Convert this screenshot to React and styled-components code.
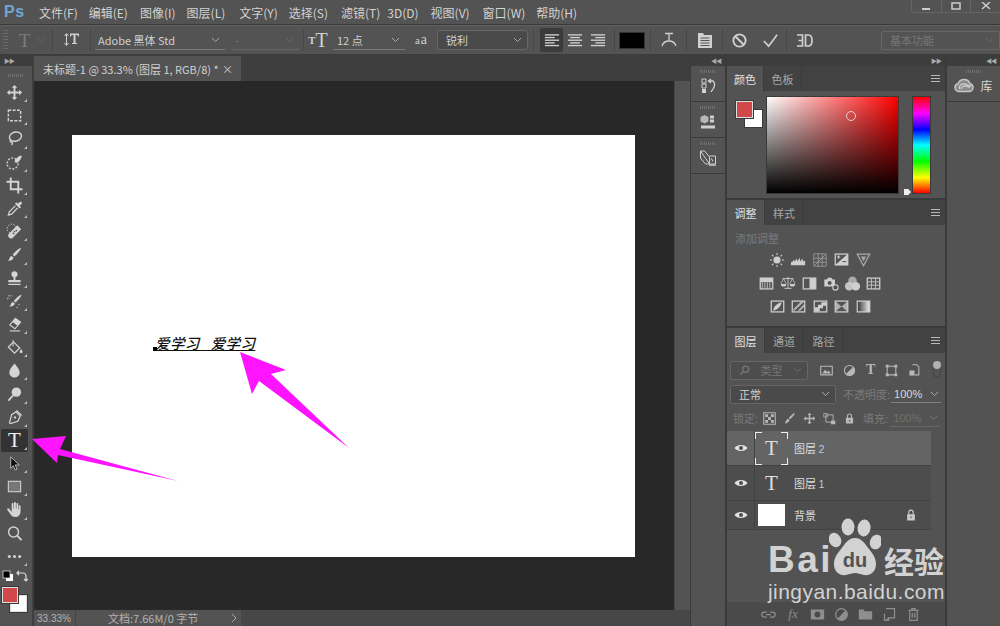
import React from "react";
import styled, { createGlobalStyle } from "styled-components";

const GlobalStyle = createGlobalStyle`
  html, body { margin: 0; padding: 0; background: #535353; }
  * { box-sizing: border-box; }
`;

const CJK = `"Noto Sans CJK SC", "Liberation Sans", sans-serif`;

const Page = styled.div`
  position: relative;
  width: 1000px;
  height: 626px;
  overflow: hidden;
  display: flex;
  flex-direction: column;
  background: #535353;
  color: #cfcfcf;
  font-family: ${CJK};
  font-size: 12px;
`;

/* menu */
const MenuBar = styled.div`
  position: relative;
  height: 25px;
  flex: none;
  display: flex;
  align-items: center;
  padding-left: 4px;
  background: #535353;
  border-bottom: 1px solid #3a3a3a;
`;

const Logo = styled.div`
  width: 35px;
  font: bold 16px "Liberation Sans", sans-serif;
  letter-spacing: 0.5px;
  color: #6ea6d6;
`;

const MenuItem = styled.div`
  margin-right: ${p => p.$gap}px;
  white-space: nowrap;
  color: #d2d2d2;
  font-size: 12px;
`;

const WindowControls = styled.div`
  position: absolute;
  top: 0;
  right: 0;
  width: 89px;
  height: 13px;
  display: flex;
  border: 1px solid #656565;
  border-top: 0;
  border-right: 0;
  border-radius: 0 0 0 3px;
`;

const WindowButton = styled.div`
  flex: 1;
  display: flex;
  align-items: center;
  justify-content: center;
  border-right: 1px solid #656565;
  &:last-child { border-right: 0; }
`;

/* options */
const OptionsBar = styled.div`
  height: 30px;
  flex: none;
  display: flex;
  align-items: center;
  padding-left: 3px;
  background: #535353;
  border-top: 1px solid #606060;
  border-bottom: 1px solid #3c3c3c;
`;

const Grip = styled.div`
  width: 6px;
  height: 20px;
  background: repeating-linear-gradient(to bottom, #6a6a6a 0 1px, transparent 1px 3px);
`;

const Sep = styled.div`
  width: 1px;
  height: 22px;
  flex: none;
  margin-left: ${p => p.$ml || 0}px;
  background: #474747;
`;

const Slot = styled.div`
  width: ${p => p.$w}px;
  height: 24px;
  flex: none;
  display: flex;
  align-items: ${p => p.$align || "center"};
  justify-content: center;
  gap: ${p => p.$gap || 0}px;
  padding-left: ${p => p.$pl || 0}px;
  color: ${p => p.$dim ? "#7c7c7c" : "#d0d0d0"};
  background: ${p => p.$active ? "#3b3b3b" : "transparent"};
  border-radius: 2px;
  margin-left: ${p => p.$ml || 0}px;
`;

const SerifT = styled.span`
  font: ${p => p.$bold ? "bold" : "normal"} ${p => p.$size}px "Liberation Serif", serif;
  line-height: 1;
  color: ${p => p.$color || "inherit"};
`;

const UnderSelect = styled.div`
  width: ${p => p.$w}px;
  height: 20px;
  flex: none;
  margin-left: ${p => p.$ml || 0}px;
  display: flex;
  align-items: center;
  justify-content: space-between;
  padding: 0 5px 0 3px;
  border-bottom: 1px solid ${p => p.$dim ? "#656565" : "#7a7a7a"};
  color: ${p => p.$dim ? "#777" : "#cfcfcf"};
  font-size: 11px;
  white-space: nowrap;
`;

const BoxSelect = styled.div`
  width: ${p => p.$w}px;
  height: ${p => p.$h || 19}px;
  flex: none;
  margin-left: ${p => p.$ml || 0}px;
  display: flex;
  align-items: center;
  justify-content: space-between;
  padding: 0 5px 0 8px;
  border: 1px solid #666;
  border-radius: 2px;
  background: ${p => p.$bg || "#4a4a4a"};
  color: ${p => p.$dim ? "#777" : "#d0d0d0"};
  font-size: 11px;
  white-space: nowrap;
`;

const ColorBox = styled.div`
  width: 26px;
  height: 17px;
  flex: none;
  margin-left: 4px;
  background: #000;
  border: 1px solid #333;
`;

/* workspace */
const Workspace = styled.div`
  flex: 1;
  min-height: 0;
  display: flex;
`;

const ToolColumn = styled.div`
  width: 34px;
  flex: none;
  display: flex;
  flex-direction: column;
  align-items: stretch;
  border-right: 2px solid #3e3e3e;
`;

const CollapseStrip = styled.div`
  height: 11px;
  flex: none;
  display: flex;
  align-items: center;
  justify-content: ${p => p.$align || "flex-end"};
  padding: 0 4px;
  background: #3d3d3d;
  color: #aaa;
  font-size: 6px;
  letter-spacing: -1px;
  line-height: 1;
`;

const SmallGrip = styled.div`
  width: 16px;
  height: 3px;
  margin: ${p => p.$top || 4}px auto 4px;
  flex: none;
  background: repeating-linear-gradient(to right, #707070 0 1px, transparent 1px 2px);
`;

const ToolButton = styled.div`
  position: relative;
  height: 23.2px;
  margin: 0 4px 0 1px;
  flex: none;
  display: flex;
  align-items: center;
  justify-content: center;
  border-radius: 2px;
  background: ${p => p.$active ? "#333" : "transparent"};
  color: #d4d4d4;
  &::after {
    content: "";
    display: ${p => p.$flyout ? "block" : "none"};
    position: absolute;
    right: 1px;
    bottom: 2px;
    border-left: 3px solid transparent;
    border-bottom: 3px solid #bbb;
  }
`;

const ColorTools = styled.div`
  display: flex;
  flex-direction: column;
  padding: 1px 0 0 2px;
`;

const MiniColorRow = styled.div`
  display: flex;
  justify-content: space-between;
  width: 26px;
  height: 15px;
  align-items: center;
`;

const SwatchStack = styled.div`
  position: relative;
  width: 26px;
  height: 26px;
  margin-top: 3px;
`;

const FrontSwatch = styled.div`
  position: absolute;
  left: ${p => p.$x}px;
  top: ${p => p.$y}px;
  width: ${p => p.$s}px;
  height: ${p => p.$s}px;
  background: ${p => p.$color};
  border: 1px solid ${p => p.$edge || "#ddd"};
  box-shadow: 0 0 0 1px #3a3a3a;
`;

const DocColumn = styled.div`
  width: 656px;
  flex: none;
  display: flex;
  flex-direction: column;
`;

const TabStrip = styled.div`
  height: 26px;
  flex: none;
  display: flex;
  align-items: flex-end;
  background: #3e3e3e;
`;

const DocTab = styled.div`
  width: 207px;
  height: 25px;
  display: flex;
  align-items: center;
  justify-content: space-between;
  padding: 0 8px 0 9px;
  background: #535353;
  color: #d0d0d0;
  font-size: 11px;
  white-space: nowrap;
`;

const DocBody = styled.div`
  flex: 1;
  min-height: 0;
  display: flex;
`;

const Viewport = styled.div`
  flex: 1;
  min-width: 0;
  background: #282828;
  padding: 54px 0 0 38px;
`;

const Artboard = styled.div`
  position: relative;
  width: 563px;
  height: 422px;
  background: #fff;
`;

const CanvasText = styled.div`
  position: absolute;
  left: 83px;
  top: 198px;
  font: italic 500 14.5px ${CJK};
  line-height: 19px;
  letter-spacing: 0.4px;
  color: #111;
  white-space: pre;
  text-decoration: underline;
  text-underline-offset: 1px;
`;

const TextCursor = styled.div`
  position: absolute;
  left: 81px;
  top: 212px;
  width: 4px;
  height: 4px;
  background: #000;
`;

const ScrollTrack = styled.div`
  width: 16px;
  flex: none;
  background: #535353;
  border-left: 1px solid #444;
`;

const StatusBar = styled.div`
  height: 16px;
  flex: none;
  display: flex;
  align-items: center;
  background: #474747;
  font-size: 11px;
  color: #b4b4b4;
`;

const ZoomBox = styled.div`
  width: 42px;
  height: 100%;
  padding-left: 3px;
  display: flex;
  align-items: center;
  background: #535353;
  border-right: 1px solid #444;
  font-family: "Liberation Sans", sans-serif;
  font-size: 10px;
`;

const DocInfo = styled.div`
  width: 165px;
  height: 100%;
  display: flex;
  align-items: center;
  justify-content: space-between;
  padding: 0 4px 0 32px;
  background: #535353;
  white-space: nowrap;
`;

/* right side */
const IconDock = styled.div`
  width: 37px;
  flex: none;
  display: flex;
  flex-direction: column;
  border-left: 1px solid #3a3a3a;
  border-right: 2px solid #3a3a3a;
`;

const DockButton = styled.div`
  height: 36px;
  flex: none;
  display: flex;
  flex-direction: column;
  align-items: center;
  justify-content: flex-start;
  border-bottom: 1px solid #3a3a3a;
  color: #d0d0d0;
`;

const PanelDock = styled.div`
  width: 220px;
  flex: none;
  display: flex;
  flex-direction: column;
  border-right: 2px solid #3a3a3a;
`;

const Panel = styled.div`
  height: ${p => p.$h}px;
  flex: ${p => p.$grow ? 1 : "none"};
  min-height: 0;
  display: flex;
  flex-direction: column;
  border-bottom: ${p => p.$grow ? 0 : "2px solid #3a3a3a"};
`;

const TabRow = styled.div`
  height: 25px;
  flex: none;
  display: flex;
  align-items: stretch;
  background: #424242;
  padding-right: 5px;
`;

const PanelTab = styled.div`
  width: ${p => p.$w}px;
  display: flex;
  align-items: center;
  justify-content: center;
  font-size: 11px;
  color: ${p => p.$active ? "#e0e0e0" : "#a8a8a8"};
  background: ${p => p.$active ? "#535353" : "transparent"};
  border-right: 1px solid #3a3a3a;
`;

const PanelMenu = styled.div`
  width: 9px;
  height: 7px;
  margin: auto 0 auto auto;
  background: repeating-linear-gradient(to bottom, #b8b8b8 0 1px, transparent 1px 3px);
`;

const ColorBody = styled.div`
  flex: 1;
  display: flex;
  padding: 6px 0 0 9px;
`;

const ColorChips = styled.div`
  position: relative;
  width: 31px;
  height: 30px;
  margin-top: 4px;
`;

const Gradient = styled.div`
  position: relative;
  width: 131px;
  height: 96px;
  background: linear-gradient(to top, #000, transparent), linear-gradient(to right, #fff, #f00);
  outline: 1px solid #3a3a3a;
`;

const Picker = styled.div`
  position: absolute;
  left: 79px;
  top: 14px;
  width: 10px;
  height: 10px;
  border-radius: 50%;
  border: 1px solid #e8d0d0;
`;

const HueBar = styled.div`
  position: relative;
  width: 17px;
  height: 96px;
  margin-left: 15px;
  outline: 1px solid #3a3a3a;
  background: linear-gradient(to bottom, #f00, #f0f 17%, #00f 34%, #0ff 50%, #0f0 67%, #ff0 84%, #f00);
`;

const HueMarker = styled.div`
  position: absolute;
  left: -9px;
  bottom: -2px;
  width: 7px;
  height: 6px;
  background: #eee;
  clip-path: polygon(0 0, 60% 0, 100% 50%, 60% 100%, 0 100%);
`;

const AdjustBody = styled.div`
  flex: 1;
  padding: 5px 0 0 8px;
`;

const MutedLabel = styled.div`
  color: ${p => p.$color || "#7a7a7a"};
  font-size: 11px;
  white-space: nowrap;
  margin-left: ${p => p.$ml || 0}px;
`;

const AdjustRows = styled.div`
  margin: 2px 0 0 20px;
  width: 130px;
`;

const AdjustRow = styled.div`
  height: 23.5px;
  display: flex;
  align-items: center;
  justify-content: center;
`;

const AdjustCell = styled.div`
  width: 21.5px;
  display: flex;
  justify-content: center;
`;

const LayerControls = styled.div`
  height: ${p => p.$h}px;
  flex: none;
  display: flex;
  align-items: center;
  padding: ${p => p.$pt || 0}px 3px 0;
`;

const IconGroup = styled.div`
  display: flex;
  align-items: center;
  margin-left: ${p => p.$ml || 0}px;
  gap: ${p => p.$gap || 0}px;
  color: #b8b8b8;
`;

const FilterToggle = styled.div`
  position: relative;
  width: 8px;
  height: 16px;
  margin-left: 12px;
  border: 1px solid #444;
  border-radius: 4px;
  &::before {
    content: "";
    position: absolute;
    left: -1px;
    top: -2px;
    width: 8px;
    height: 8px;
    border-radius: 50%;
    background: #b0b0b0;
  }
`;

const OpacitySelect = styled.div`
  width: 50px;
  height: 18px;
  margin-left: ${p => p.$ml || 1}px;
  display: flex;
  align-items: center;
  justify-content: space-between;
  padding-right: 2px;
  border-bottom: 1px solid ${p => p.$dim ? "#666" : "#808080"};
  color: ${p => p.$dim ? "#707070" : "#d8d8d8"};
  font: 11px "Liberation Sans", sans-serif;
  padding-left: 3px;
`;

const LayerList = styled.div`
  width: 204px;
  flex: none;
`;

const LayerRow = styled.div`
  height: ${p => p.$h}px;
  display: flex;
  align-items: center;
  background: ${p => p.$selected ? "#646464" : "#4d4d4d"};
  border-bottom: 1px solid #424242;
`;

const EyeCell = styled.div`
  width: 28px;
  height: 100%;
  flex: none;
  display: flex;
  align-items: center;
  justify-content: center;
  border-right: 1px solid #424242;
`;

const LayerThumb = styled.div`
  width: ${p => p.$w || 33}px;
  height: ${p => p.$h}px;
  flex: none;
  margin-left: ${p => p.$ml}px;
  display: flex;
  align-items: center;
  justify-content: center;
  background: ${p => p.$white ? "#fff" : "transparent"};
  color: #ddd;
`;

const SelectedThumb = styled(LayerThumb)`
  position: relative;
  border: 0;
  background:
    linear-gradient(#eee, #eee) 0 0 / 7px 1px no-repeat,
    linear-gradient(#eee, #eee) 0 0 / 1px 7px no-repeat,
    linear-gradient(#eee, #eee) 100% 0 / 7px 1px no-repeat,
    linear-gradient(#eee, #eee) 100% 0 / 1px 7px no-repeat,
    linear-gradient(#eee, #eee) 0 100% / 7px 1px no-repeat,
    linear-gradient(#eee, #eee) 0 100% / 1px 7px no-repeat,
    linear-gradient(#eee, #eee) 100% 100% / 7px 1px no-repeat,
    linear-gradient(#eee, #eee) 100% 100% / 1px 7px no-repeat;
`;

const LayerName = styled.div`
  margin-left: ${p => p.$ml}px;
  color: #dcdcdc;
  font-size: 11px;
  white-space: nowrap;
  span { color: #a9c9e8; font-family: "Liberation Sans", sans-serif; font-size: 11px; }
`;

const LockMark = styled.div`
  margin-left: auto;
  margin-right: 13px;
  display: flex;
  color: #c8c8c8;
`;

const LayerSpacer = styled.div`
  flex: 1;
`;

const LayerFooter = styled.div`
  height: 24px;
  flex: none;
  display: flex;
  align-items: center;
  padding-left: 34px;
  gap: 9px;
  background: #4a4a4a;
  color: #8e8e8e;
`;

const FooterFx = styled.span`
  width: 16px;
  text-align: center;
  font: italic 13px "Liberation Serif", serif;
  color: #8e8e8e;
`;

const LibDock = styled.div`
  flex: 1;
  min-width: 0;
  display: flex;
  flex-direction: column;
`;

const LibButton = styled.div`
  height: 36px;
  flex: none;
  display: flex;
  flex-direction: column;
  align-items: center;
  border-bottom: 1px solid #3a3a3a;
`;

const LibInner = styled.div`
  display: flex;
  align-items: center;
  gap: 6px;
  font-size: 12px;
  color: #d8d8d8;
`;

/* overlays */
const ArrowLayer = styled.svg`
  position: absolute;
  left: 0;
  top: 0;
  pointer-events: none;
`;

const Watermark = styled.div`
  position: absolute;
  left: 768px;
  top: 518px;
  width: 200px;
  color: #d2d2d2;
  pointer-events: none;
`;

const BaiduRow = styled.div`
  display: flex;
  align-items: flex-end;
  height: 60px;
`;

const BaiWord = styled.span`
  font: bold 37px/36px "Liberation Sans", sans-serif;
  letter-spacing: 2.5px;
`;

const PawSpot = styled.div`
  width: 52px;
  height: 60px;
  flex: none;
  margin-left: -4px;
`;

const JingYan = styled.span`
  font: bold 30px/36px ${CJK};
  margin-left: 3px;
  white-space: nowrap;
`;

const Domain = styled.div`
  font: 21px/24px "Liberation Sans", "Open Sans", sans-serif;
  letter-spacing: 0.45px;
  margin-top: 2px;
  white-space: nowrap;
`;

const Svg = ({ size = 18, children, ...rest }) => (
  <svg width={size} height={size} viewBox="0 0 18 18" fill="currentColor" stroke="none" {...rest}>{children}</svg>
);

const Chevron = ({ color = "#aaa" }) => (
  <svg width="9" height="6" viewBox="0 0 9 6" fill="none" stroke={color} strokeWidth="1"><path d="M1 1l3.5 3.5L8 1" /></svg>
);

const S = { fill: "none", stroke: "currentColor", strokeWidth: 1.5 };

const toolIcons = {
  move: <path d="M9 1l3 3h-2v4h4V6l3 3-3 3v-2h-4v4h2l-3 3-3-3h2v-4H4v2L1 9l3-3v2h4V4H6z" />,
  marquee: <rect x="2.5" y="3.5" width="13" height="11" {...S} strokeDasharray="3 1.6" />,
  lasso: <><ellipse cx="10" cy="7" rx="6.5" ry="4.8" {...S} transform="rotate(-15 10 7)" /><path d="M5 10c-1 2 0 3 1 3s1 2 0 3" {...S} /></>,
  quick: <><circle cx="7" cy="10" r="5.8" {...S} strokeDasharray="2 1.6" /><path d="M16.5 1.5c.6 3-3 7-6 8l-1.5-1.8c1-2.8 4.500-6 7.500-6.200z" /></>,
  crop: <path d="M5 0.500V13h12.500M0.500 5H13v12.500" fill="none" stroke="currentColor" strokeWidth="2" />,
  dropper: <><path d="M11 2.500l1.500 1.500 2-2c2-1 3 1 2 2.200l-2 2 1.400 1.500-1.400 1.300L9.500 3.900z" /><path d="M10 6L3.500 12.500 2.500 16l3.300-1 6.500-6.500" {...S} strokeWidth="1.300" /></>,
  heal: <><circle cx="6" cy="6" r="4.800" {...S} strokeWidth="1" strokeDasharray="1.500 1.500" /><path d="M12 2.500l4 4-9 9.500c-1.500 1-3 .5-4-.7s-1-2.500 0-3.800z" /><circle cx="9" cy="9" r=".9" fill="#535353" /><circle cx="11" cy="8" r=".9" fill="#535353" /><circle cx="8" cy="11" r=".9" fill="#535353" /></>,
  brush: <path d="M16 1.500c-.5 2.500-4.500 7.500-7 9.500L7 9.200C9 6.500 13.500 2.500 16 1.500zM6 10.500l2 2c-.5 2.500-3.500 3.500-6 3 1.500-1 1.500-2 2-3.300.3-.9 1-1.500 2-1.700z" />,
  stamp: <><circle cx="9" cy="4.500" r="3.200" /><path d="M8 7h2v3.500h5.500V13h-13v-2.500H8zM2.500 14.500h13V16h-13z" /></>,
  history: <><path d="M16.500 1.500c-.5 2.500-4 6.500-6.500 8.500L8.300 8.400c2-2.800 5.700-6 8.200-6.900zM7.500 9.400l1.900 1.800c-.5 2.500-3.500 3.500-5.900 3 1.500-1 1.400-2 1.900-3.200.4-.9 1.100-1.400 2.100-1.600z" /><path d="M2 3h5M1 6h3M13 12l2 1M11 15l2 1" {...S} strokeWidth="1" strokeDasharray="1.500 1" /></>,
  eraser: <><path d="M10 2.500l5.500 4-6 7-5.500-4z" {...S} strokeWidth="1.200" /><path d="M10 2.500l5.500 4-3.200 3.800-5.500-4z" /><path d="M4 15.800h11" {...S} strokeWidth="1.200" /></>,
  bucket: <><path d="M8 3l6.500 6.500L9 15 2.500 8.500z" {...S} strokeWidth="1.300" /><path d="M7.500 1v7" {...S} strokeWidth="1" /><path d="M16 10.500c1 1.500 1.500 2.300 1.500 3a1.500 1.500 0 0 1-3 0c0-.7.500-1.500 1.500-3z" /></>,
  blur: <path d="M9 1.500c3 4 5.500 6.500 5.500 9.500a5.500 5.500 0 0 1-11 0c0-3 2.500-5.500 5.500-9.500z" />,
  dodge: <><circle cx="11" cy="6.500" r="5" /><path d="M7.500 10L2.500 15.500" {...S} strokeWidth="1.800" /></>,
  pen: <><path d="M10.500 3l4.500 4.500-2.500 5.500-7.800 2.500-1-1L6 6z" {...S} strokeWidth="1.300" /><circle cx="9.500" cy="9" r="1.200" /><path d="M11 1.500L16.500 7" {...S} /></>,
  select: <path d="M5 2l9 8.500H9.700l2 4.500-2 .8-2-4.500L5 14z" fill="#111" stroke="#ddd" strokeWidth="0.800" />,
  rect: <rect x="2.500" y="3.500" width="13" height="11" fill="#777" stroke="#ccc" strokeWidth="1.200" />,
  hand: <path d="M7 2c.7 0 1 .5 1 1.200V8h.5V2.200c0-.8.500-1.200 1-1.200s1 .4 1 1.200V8h.5V3.200c0-.7.500-1.200 1-1.200s1 .5 1 1.200V9l.5 0V5.500c0-.7.400-1 .9-1s1 .4 1 1V11c0 3.500-2.500 6-5.500 6-2.800 0-4-1-5.500-3.500L1.500 9.500c-.5-.8-.2-1.500.3-1.800.6-.3 1.300 0 1.700.6L5.500 11h.5V3.200C6 2.500 6.400 2 7 2z" />,
  zoom: <><circle cx="8" cy="7.500" r="5.300" {...S} /><path d="M11.800 11.300l4.700 4.700" {...S} strokeWidth="2" /></>,
  more: <><circle cx="3.500" cy="9" r="1.600" /><circle cx="9" cy="9" r="1.600" /><circle cx="14.500" cy="9" r="1.600" /></>,
};

const tools = [
  ["move", true], ["marquee", true], ["lasso", true], ["quick", true], ["crop", true], ["dropper", true],
  ["heal", true], ["brush", true], ["stamp", true], ["history", true], ["eraser", true], ["bucket", true],
  ["blur", true], ["dodge", true], ["pen", true], ["text", true], ["select", true], ["rect", true],
  ["hand", true], ["zoom", false], ["more", true],
];

const adjustRows = [
  ["sun", "levels", "curves", "exposure", "vibrance"],
  ["hsl", "balance", "bw", "photo", "mixer", "lookup"],
  ["invert", "posterize", "threshold", "selective", "gradmap"],
];

const Boxed = ({ children }) => (
  <Svg size={15}><rect x="1.500" y="2.500" width="15" height="13" fill="none" stroke="currentColor" strokeWidth="1.500" />{children}</Svg>
);

const adjustIcon = {
  sun: <Svg size={16}><circle cx="9" cy="9" r="4" /><path d="M9 1v2.500M9 14.500V17M1 9h2.500M14.500 9H17M3.300 3.300L5 5M13 13l1.700 1.700M3.300 14.700L5 13M13 5l1.700-1.700" {...S} strokeWidth="1.200" /></Svg>,
  levels: <Svg size={17}><path d="M1 15v-3l2-1 1-2 1 2 2-3 1 3 2-4 1 4 2-3 1 3 2-1v5z" /></Svg>,
  curves: <Svg size={16} color="#999"><path d="M2 2h14v14H2zM2 7h14M2 11.500h14M7 2v14M11.500 2v14" fill="none" stroke="currentColor" strokeWidth="1" /><path d="M3 15L15 3" {...S} strokeWidth="1" /></Svg>,
  exposure: <Boxed><path d="M1.500 15.500L16.500 2.500v13z" /><path d="M3.500 6h4M5.500 4v4" {...S} strokeWidth="1.200" /><path d="M10 11.500h4.500" stroke="#535353" strokeWidth="1.200" /></Boxed>,
  vibrance: <Svg size={15} color="#aaa"><path d="M1.500 2.500h15L9 16.500z" {...S} /><path d="M6 5.500h6L9 11.500z" /></Svg>,
  hsl: <Boxed><path d="M1.500 2.500h15v5h-15z" /><path d="M4 8v7M7 8v7M10 8v7M13 8v7" stroke="currentColor" strokeWidth="1" /></Boxed>,
  balance: <Svg size={16}><path d="M9 2v13M3 4h12M5 15h8" {...S} strokeWidth="1" /><path d="M1 10a3 3 0 0 0 6 0zM11 10a3 3 0 0 0 6 0z" /><path d="M4 4l-3 6M4 4l3 6M14 4l-3 6M14 4l3 6" {...S} strokeWidth=".8" /></Svg>,
  bw: <Boxed><path d="M9 2.500h7.500v13H9z" /></Boxed>,
  photo: <Svg size={16}><path d="M1.500 5h3l1-2h4l1 2h3v8H1.500z" /><circle cx="7.500" cy="9" r="2.200" fill="#535353" /><circle cx="14" cy="14" r="3" fill="#535353" stroke="currentColor" strokeWidth="1.200" /></Svg>,
  mixer: <Svg size={17}><circle cx="9" cy="6" r="4.500" opacity=".7" /><circle cx="5.500" cy="12" r="4.500" opacity=".9" /><circle cx="12.500" cy="12" r="4.500" /></Svg>,
  lookup: <Boxed><path d="M1.500 7h15M1.500 11h15M6.500 2.500v13M11.500 2.500v13" stroke="currentColor" strokeWidth="1" /></Boxed>,
  invert: <Boxed><path d="M4 14c0-5 5-9 10-10-1 5-5 9-10 10z" /></Boxed>,
  posterize: <Boxed><path d="M3 12L12 3h4L3 15zM8 14l8-8v3l-5 5z" opacity=".8" /></Boxed>,
  threshold: <Boxed><path d="M2 15v-5h4V7h4V4h6v4h-4v3H8v4z" /></Boxed>,
  selective: <Boxed><path d="M2 3l7 6-7 6zM16 3L9 9l7 6z" opacity=".75" /></Boxed>,
  gradmap: <svg width="15" height="15" viewBox="0 0 18 18"><defs><linearGradient id="gm"><stop offset="0" stopColor="#333" /><stop offset="1" stopColor="#eee" /></linearGradient></defs><rect x="1.500" y="2.500" width="15" height="13" fill="url(#gm)" stroke="#ccc" strokeWidth="1.500" /></svg>,
};

const menus = [
  ["文件(F)", 11], ["编辑(E)", 12], ["图像(I)", 11], ["图层(L)", 14], ["文字(Y)", 11], ["选择(S)", 13],
  ["滤镜(T)", 7], ["3D(D)", 12], ["视图(V)", 13], ["窗口(W)", 11], ["帮助(H)", 0],
];

const AlignIcon = ({ kind }) => {
  const rows = [[1, 16], [1, 11], [1, 16], [1, 11], [1, 16]];
  const shift = { left: 0, center: 0.5, right: 1 }[kind];
  return (
    <Svg size={16}>
      {rows.map(([x, w], i) => (
        <rect key={i} x={1 + (16 - w) * shift} y={2.500 + i * 3} width={w} height="1.500" />
      ))}
    </Svg>
  );
};

const Eye = () => (
  <svg width="14" height="10" viewBox="0 0 14 10"><path d="M0.500 5C3 1 11 1 13.500 5 11 9 3 9 0.500 5z" fill="#e4e4e4" /><circle cx="7" cy="5" r="2" fill="#4d4d4d" /></svg>
);

const LockIcon = ({ size = 13 }) => (
  <Svg size={size}><path d="M5.500 8V5.500a3.500 3.500 0 0 1 7 0V8h1.500v8H4V8zM7 8h4V5.500a2 2 0 0 0-4 0z" /><circle cx="9" cy="12" r="1" fill="#535353" /></Svg>
);

const App = () => {
  return (
    <Page>
      <GlobalStyle />
      <MenuBar>
        <Logo>Ps</Logo>
        {menus.map(([label, gap]) => <MenuItem key={label} $gap={gap}>{label}</MenuItem>)}
        <WindowControls>
          <WindowButton><svg width="9" height="9"><rect x="0" y="6" width="8" height="2" fill="#ccc" /></svg></WindowButton>
          <WindowButton><svg width="10" height="9"><rect x="1" y="1" width="8" height="6" fill="none" stroke="#ccc" strokeWidth="1.500" /></svg></WindowButton>
          <WindowButton><svg width="10" height="9" viewBox="0 0 10 9"><path d="M1 0l8 7M9 0L1 7" stroke="#ccc" strokeWidth="1.500" /></svg></WindowButton>
        </WindowControls>
      </MenuBar>

      <OptionsBar>
        <Grip />
        <Slot $w={44} $gap={6} $pl={4} $dim>
          <SerifT $size={19}>T</SerifT>
          <Chevron color="#666" />
        </Slot>
        <Sep />
        <Slot $w={37}>
          <Svg size={18}>
            <path d="M3.500 3v11M1.500 5l2-2.500 2 2.500M1.500 12l2 2.500 2-2.500" {...S} strokeWidth="1" />
            <path d="M7 2.500h9v3h-1l-.5-1.500H12.500v8H14v1H9v-1h1.500V4H8.500L8 5.500H7zM8 15.500h8" />
          </Svg>
        </Slot>
        <Sep />
        <UnderSelect $w={130} $ml={4}>Adobe 黑体 Std<Chevron /></UnderSelect>
        <UnderSelect $w={67} $ml={7} $dim>-<Chevron color="#666" /></UnderSelect>
        <Sep $ml={4} />
        <Slot $w={28}>
          <SerifT $size={11} $bold>T</SerifT><SerifT $size={20}>T</SerifT>
        </Slot>
        <UnderSelect $w={71} $ml={2}>12 点<Chevron /></UnderSelect>
        <Slot $w={32} $gap={1}><SerifT $size={11}>a</SerifT><SerifT $size={14}>a</SerifT></Slot>
        <BoxSelect $w={91} $h={20}>锐利<Chevron /></BoxSelect>
        <Sep $ml={5} />
        <Slot $w={23} $ml={6} $active><AlignIcon kind="left" /></Slot>
        <Slot $w={23}><AlignIcon kind="center" /></Slot>
        <Slot $w={23}><AlignIcon kind="right" /></Slot>
        <Sep $ml={5} />
        <ColorBox />
        <Sep $ml={5} />
        <Slot $w={35}>
          <Svg size={18}><path d="M5 2.500h8M9 2.500v7" {...S} strokeWidth="1.300" /><path d="M2 15c1-3 3-5 7-5s6 2 7 5" {...S} strokeWidth="1.300" /></Svg>
        </Slot>
        <Sep />
        <Slot $w={35}>
          <Svg size={18}><path d="M2 2h5l1 2h8v13H2z" /><path d="M4.500 7h9M4.500 9.500h9M4.500 12h9M4.500 14.500h9" stroke="#535353" strokeWidth="1" /></Svg>
        </Slot>
        <Sep />
        <Slot $w={32}>
          <Svg size={17}><circle cx="9" cy="9" r="6.500" {...S} strokeWidth="2" /><path d="M4.500 4.500l9 9" {...S} strokeWidth="2" /></Svg>
        </Slot>
        <Slot $w={31}>
          <Svg size={17}><path d="M2 9.500l5 5.500L16 3" {...S} strokeWidth="1.800" /></Svg>
        </Slot>
        <Sep />
        <Slot $w={34}>
          <svg width="17" height="15" viewBox="0 0 17 15" fill="none" stroke="#cfcfcf" strokeWidth="1.700"><path d="M1 2h5.500v11H1M2.500 7.500h4M9.500 2h3c3 0 3.500 2 3.500 5.500s-.5 5.500-3.500 5.500h-3z" /></svg>
        </Slot>
        <BoxSelect $w={119} $ml={60} $bg="#535353" $dim>基本功能<Chevron color="#666" /></BoxSelect>
      </OptionsBar>

      <Workspace>
        <ToolColumn>
          <CollapseStrip $align="flex-start">▶▶</CollapseStrip>
          <SmallGrip $top={8} />
          {tools.map(([name, flyout]) => (
            <ToolButton key={name} $active={name === "text"} $flyout={flyout}>
              {name === "text"
                ? <SerifT $size={21} $color="#efefef">T</SerifT>
                : <Svg size={17}>{toolIcons[name]}</Svg>}
            </ToolButton>
          ))}
          <ColorTools>
            <MiniColorRow>
              <svg width="12" height="12" viewBox="0 0 12 12"><rect x="4" y="4" width="7" height="7" fill="#fff" /><rect x="1" y="1" width="7" height="7" fill="#000" stroke="#ddd" strokeWidth=".8" /></svg>
              <svg width="12" height="12" viewBox="0 0 12 12" fill="none" stroke="#ddd" strokeWidth="1.200"><path d="M1 3h6c1.500 0 3 1.500 3 3v5M3 1L1 3l2 2M8 9l2 2 2-2" /></svg>
            </MiniColorRow>
            <SwatchStack>
              <FrontSwatch $x={8} $y={8} $s={17} $color="#fff" />
              <FrontSwatch $x={0} $y={0} $s={16} $color="#d2474a" />
            </SwatchStack>
          </ColorTools>
        </ToolColumn>

        <DocColumn>
          <TabStrip>
            <DocTab>未标题-1 @ 33.3% (图层 1, RGB/8) *<span>×</span></DocTab>
          </TabStrip>
          <DocBody>
            <Viewport>
              <Artboard>
                <CanvasText>爱学习   爱学习</CanvasText>
                <TextCursor />
              </Artboard>
            </Viewport>
            <ScrollTrack />
          </DocBody>
          <StatusBar>
            <ZoomBox>33.33%</ZoomBox>
            <DocInfo>文档:7.66M/0 字节<svg width="6" height="10" viewBox="0 0 6 10" fill="none" stroke="#aaa"><path d="M1 1l4 4-4 4" /></svg></DocInfo>
          </StatusBar>
        </DocColumn>

        <IconDock>
          <CollapseStrip>◀◀</CollapseStrip>
          <DockButton>
            <SmallGrip />
            <Svg size={18}>
              <path d="M3 2h4v4H3zM3 7h4v4H3z" fill="none" stroke="currentColor" />
              <path d="M3 12h4v4H3z" />
              <path d="M9 4h5c2 2 2 5 0 8l-2 3M12 2L9.500 4 12 6" {...S} strokeWidth="1.300" />
            </Svg>
          </DockButton>
          <DockButton>
            <SmallGrip />
            <Svg size={18}>
              <path d="M5.500 2l4 2v4.500l-4 2-4-2V4z" opacity=".8" />
              <path d="M11 2.500h4v3h-4zM11 6.500h4v3h-4zM2 12.500h14v3H2z" />
            </Svg>
          </DockButton>
          <DockButton>
            <SmallGrip />
            <Svg size={18}>
              <path d="M1.500 2h4l5 6v7h-4l-5-6zM1.500 2l9 13M10.500 7h6v8h-6" {...S} strokeWidth="1" />
              <path d="M10 15.500h7v1.200h-7zM12.500 9l2 3-1 .5-1.500-2.500z" />
            </Svg>
          </DockButton>
        </IconDock>

        <PanelDock>
          <CollapseStrip $align="space-between">
            <span />
            <span>▶▶</span>
          </CollapseStrip>
          <Panel $h={134}>
            <TabRow>
              <PanelTab $w={37} $active>颜色</PanelTab>
              <PanelTab $w={38}>色板</PanelTab>
              <PanelMenu />
            </TabRow>
            <ColorBody>
              <ColorChips>
                <FrontSwatch $x={9} $y={9} $s={17} $color="#fff" $edge="#fff" />
                <FrontSwatch $x={0} $y={0} $s={17} $color="#d2474a" />
              </ColorChips>
              <Gradient><Picker /></Gradient>
              <HueBar><HueMarker /></HueBar>
            </ColorBody>
          </Panel>
          <Panel $h={128}>
            <TabRow>
              <PanelTab $w={38} $active>调整</PanelTab>
              <PanelTab $w={39}>样式</PanelTab>
              <PanelMenu />
            </TabRow>
            <AdjustBody>
              <MutedLabel>添加调整</MutedLabel>
              <AdjustRows>
                {adjustRows.map((row, i) => (
                  <AdjustRow key={i}>
                    {row.map(name => <AdjustCell key={name}>{adjustIcon[name]}</AdjustCell>)}
                  </AdjustRow>
                ))}
              </AdjustRows>
            </AdjustBody>
          </Panel>
          <Panel $grow>
            <TabRow>
              <PanelTab $w={38} $active>图层</PanelTab>
              <PanelTab $w={39}>通道</PanelTab>
              <PanelTab $w={40}>路径</PanelTab>
              <PanelMenu />
            </TabRow>
            <LayerControls $h={32} $pt={2}>
              <BoxSelect $w={78} $h={19} $bg="#4d4d4d" $dim>
                <Svg size={11}><circle cx="11" cy="7" r="5" {...S} strokeWidth="2" /><path d="M7 11l-5 5" {...S} strokeWidth="2" /></Svg>
                类型
                <Chevron color="#666" />
              </BoxSelect>
              <IconGroup $ml={12} $gap={10}>
                <Svg size={13}><path d="M1 3h16v12H1z" {...S} /><path d="M3 13l4-5 3 3 2-2 3 4z" /></Svg>
                <Svg size={13}><circle cx="9" cy="9" r="7" {...S} /><path d="M14 4a7 7 0 0 1-10 10z" /></Svg>
                <SerifT $size={14} $bold>T</SerifT>
                <Svg size={13}><path d="M3 3h12v12H3z" {...S} /><path d="M1 1h4v4H1zM13 1h4v4h-4zM1 13h4v4H1zM13 13h4v4h-4z" /></Svg>
                <Svg size={13}><path d="M6 1h6l3 3v11H9" {...S} /><path d="M2 9h7v7H2z" /></Svg>
              </IconGroup>
              <FilterToggle />
            </LayerControls>
            <LayerControls $h={18}>
              <BoxSelect $w={106} $h={19} $bg="#4a4a4a">正常<Chevron /></BoxSelect>
              <MutedLabel $ml={7}>不透明度:</MutedLabel>
              <OpacitySelect>100%<Chevron /></OpacitySelect>
            </LayerControls>
            <LayerControls $h={28} $pt={2}>
              <MutedLabel $ml={3}>锁定:</MutedLabel>
              <IconGroup $ml={5} $gap={7}>
                <Svg size={13}><path d="M1 1h16v16H1z" {...S} /><path d="M3 3h4v4H3zM11 3h4v4h-4zM7 7h4v4H7zM3 11h4v4H3zM11 11h4v4h-4z" /></Svg>
                <Svg size={13}><path d="M16.500 1c-.5 3-4 7-7 9L8 8.500C10 5.500 14 2 16.500 1zM7 9.500L9 11c-.5 3-3.500 5-7 5 1.500-1 1.500-2.500 2-3.700C4.500 11 5.500 10 7 9.500z" /></Svg>
                <Svg size={13}>{toolIcons.move}</Svg>
                <Svg size={13}><path d="M4 4h10v10H4z" {...S} strokeWidth="1.200" /><path d="M1 2h5v5H1z" fill="none" stroke="currentColor" /><path d="M11 12h6v5h-6z" /></Svg>
                <LockIcon />
              </IconGroup>
              <MutedLabel $ml={7}>填充:</MutedLabel>
              <OpacitySelect $dim $ml={2}>100%<Chevron color="#777" /></OpacitySelect>
            </LayerControls>
            <LayerList>
              <LayerRow $h={35} $selected>
                <EyeCell><Eye /></EyeCell>
                <SelectedThumb $ml={0} $h={33}><SerifT $size={21}>T</SerifT></SelectedThumb>
                <LayerName $ml={6}>图层 <span>2</span></LayerName>
              </LayerRow>
              <LayerRow $h={35}>
                <EyeCell><Eye /></EyeCell>
                <LayerThumb $ml={0} $h={33}><SerifT $size={21}>T</SerifT></LayerThumb>
                <LayerName $ml={6}>图层 <span>1</span></LayerName>
              </LayerRow>
              <LayerRow $h={29}>
                <EyeCell><Eye /></EyeCell>
                <LayerThumb $ml={3} $white $w={27} $h={22} />
                <LayerName $ml={9}>背景</LayerName>
                <LockMark><LockIcon size={14} /></LockMark>
              </LayerRow>
            </LayerList>
            <LayerSpacer />
            <LayerFooter>
              <Svg size={15}><path d="M7 6H4a3 3 0 0 0 0 6h3M11 6h3a3 3 0 0 1 0 6h-3M6 9h6" {...S} /></Svg>
              <FooterFx>fx</FooterFx>
              <Svg size={15}><path fillRule="evenodd" d="M1 3h16v12H1zM9 5.500a3.500 3.500 0 1 0 0 7 3.500 3.500 0 0 0 0-7z" /></Svg>
              <Svg size={15}><circle cx="9" cy="9" r="7" {...S} /><path d="M14 4a7 7 0 0 1-10 10z" /></Svg>
              <Svg size={15}><path d="M1 3h6l1 2h9v10H1z" /></Svg>
              <Svg size={15}><path d="M5 2h10v11H8v3H3V8" {...S} /><path d="M8 13l-3 3" {...S} /></Svg>
              <Svg size={15}><path d="M3 4h12M7 4V2h4v2M4.500 4v12h9V4M7.500 7v6M10.500 7v6" {...S} /></Svg>
            </LayerFooter>
          </Panel>
        </PanelDock>

        <LibDock>
          <CollapseStrip>◀◀</CollapseStrip>
          <LibButton>
            <SmallGrip />
            <LibInner>
              <svg width="20" height="15" viewBox="0 0 20 15" fill="none" stroke="#c8c8c8" strokeWidth="1.500">
                <path d="M5 13.500C2.500 13.500 1 11.500 1 9.500c0-2 1.500-3.500 3-3.800C5 3 7.500 1.500 10 1.500c3 0 5 1.500 6 4 1.500.5 3 2 3 4 0 2.300-2 4-4 4z" fill="#8a8a8a" />
                <path d="M6 11c-2-3 2-6 5-5s4 2 6 2M8 11c-1-2 1-3 3-3s3 1 5 1" />
              </svg>
              库
            </LibInner>
          </LibButton>
        </LibDock>
      </Workspace>

      <ArrowLayer width="1000" height="626" viewBox="0 0 1000 626">
        <path d="M240 352L286 370 271 374 349 448 259 381 252 394z" fill="#ff14ff" />
        <path d="M32 439L66 436 60 449 178 481 58 455 57 463z" fill="#ff14ff" />
      </ArrowLayer>

      <Watermark>
        <BaiduRow>
          <BaiWord>Bai</BaiWord>
          <PawSpot>
            <svg width="52" height="60" viewBox="0 0 52 60" fill="#d2d2d2">
              <ellipse cx="19" cy="9" rx="6.500" ry="8.500" />
              <ellipse cx="35" cy="10" rx="6.500" ry="8.500" transform="rotate(8 35 10)" />
              <ellipse cx="6" cy="22" rx="6" ry="7.500" transform="rotate(-25 6 22)" />
              <ellipse cx="47" cy="24" rx="6" ry="7.500" transform="rotate(20 47 24)" />
              <path d="M26 20c7 0 10 6 14 11 5 6 7 10 7 15 0 8-6 12-12 11-4-1-6-2-9-2s-5 1-9 2C11 58 5 54 5 46c0-5 2-9 7-15 4-5 7-11 14-11z" />
              <text x="26" y="49" textAnchor="middle" fontFamily="Liberation Sans, sans-serif" fontWeight="bold" fontSize="20" fill="#535353">du</text>
            </svg>
          </PawSpot>
          <JingYan>经验</JingYan>
        </BaiduRow>
        <Domain>jingyan.baidu.com</Domain>
      </Watermark>
    </Page>
  );
};

export default App;
